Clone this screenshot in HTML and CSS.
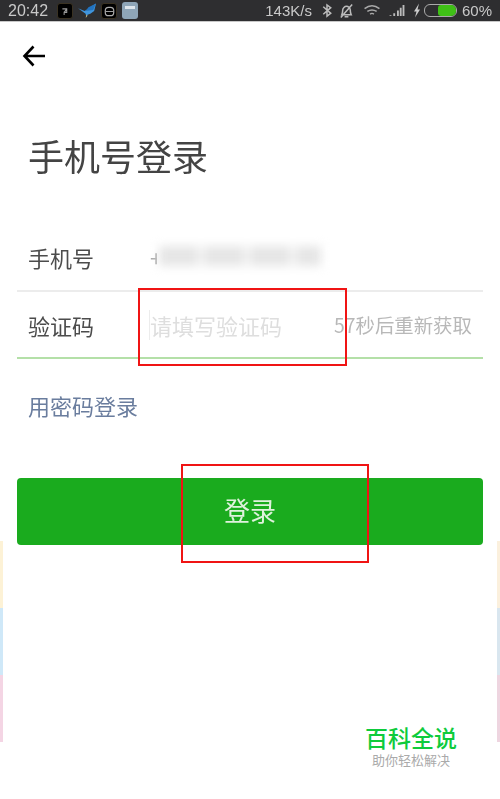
FILE: index.html
```html
<!DOCTYPE html>
<html lang="zh">
<head>
<meta charset="utf-8">
<title>手机号登录</title>
<link rel="stylesheet" href="styles.css">
</head>
<body>
<div class="phone">
  <header class="status">
    <div class="status-left">
      <span class="time">20:42</span>
      <span class="app-tile"><svg viewBox="0 0 16 16" width="14" height="15"><path d="M5 5h5v4H7v3M10 5l-3 4" fill="none" stroke="#999" stroke-width="1.200"/></svg></span>
      <svg class="bird" viewBox="0 0 20 16" width="19" height="16"><path d="M19 0l-2 8-4 3-3 1-1 3-1-4-8-6 7 3z" fill="#3f94dc"/><path d="M8 8l3-4 8-4-3 7z" fill="#2273c0"/><path d="M9 12l-1 3 2-2z" fill="#d9b45a"/></svg>
      <span class="app-tile"><svg viewBox="0 0 16 16" width="15" height="15"><rect x="3.500" y="3.500" width="9" height="9" rx="3.500" fill="none" stroke="#aaa" stroke-width="1.300"/><path d="M4 8h8" stroke="#aaa"/></svg></span>
      <span class="note"><span class="note-bar"></span></span>
    </div>
    <div class="status-right">
      <span class="speed">143K/s</span>
      <svg class="i-bt" viewBox="0 0 10 16" width="10" height="15"><path d="M1 4l8 7-4 3V2l4 3-8 7" fill="none" stroke="#bbb" stroke-width="1.600"/></svg>
      <svg class="i-bell" viewBox="0 0 18 16" width="17" height="16"><path d="M4 12c1-2 1-3 1-5 0-2 2-4 4-4s4 2 4 4c0 2 0 3 1 5zM7 14h4M3 15L15 1" fill="none" stroke="#bbb" stroke-width="1.600"/></svg>
      <svg class="i-wifi" viewBox="0 0 18 14" width="18" height="13"><path d="M1 5c5-4 11-4 16 0M4 8c3-2 7-2 10 0M7 11c1-1 3-1 4 0" fill="none" stroke="#aaa" stroke-width="1.600"/></svg>
      <svg class="i-signal" viewBox="0 0 18 14" width="18" height="13"><path d="M1 12h2v1H1zM5 10h2v3H5zM9 7h2v6H9zM12 4h2v9h-2zM15 1h2v12h-2z" fill="#bbb"/></svg>
      <svg class="i-bolt" viewBox="0 0 8 14" width="8" height="15"><path d="M6 0L1 8h2.500L2 14l5-8H4.500z" fill="#ccc"/></svg>
      <span class="battery"><span class="battery-fill"></span></span>
      <span class="pct">60%</span>
    </div>
  </header>
  <div class="shade"></div>

  <main class="content">
    <button class="back" aria-label="返回">
      <svg viewBox="0 0 24 24" width="24" height="24"><path d="M23 12H2.500M11.500 2.500L2.500 12l9 9.500" fill="none" stroke="#000" stroke-width="2.600"/></svg>
    </button>
    <h1 class="title">手机号登录</h1>

    <section class="form">
      <div class="row row-phone">
        <span class="label">手机号</span>
        <span class="phone-value"><span class="plus">+</span><span class="blur"><span class="smudge"></span></span></span>
      </div>
      <div class="row row-code">
        <span class="label">验证码</span>
        <span class="code-input"><span class="caret"></span>请填写验证码</span>
        <span class="resend">57秒后重新获取</span>
      </div>
    </section>

    <a class="pw-link">用密码登录</a>
    <button class="login">登录</button>
  </main>

  <div class="mark mark-code"></div>
  <div class="mark mark-login"></div>

  <div class="edge edge-left"><i class="e-yellow"></i><i class="e-blue"></i><i class="e-pink"></i></div>
  <div class="edge edge-right"><i class="e-yellow"></i><i class="e-blue"></i><i class="e-pink"></i></div>

  <div class="watermark">
    <div class="wm-title">百科全说</div>
    <div class="wm-sub">助你轻松解决</div>
  </div>
</div>
</body>
</html>
```
FILE: styles.css
```css
* { box-sizing: border-box; }
html, body { margin: 0; padding: 0; background: #fff; }
body { font-family: "Noto Sans CJK SC", "Liberation Sans", sans-serif; }
.phone { position: relative; width: 500px; height: 799px; overflow: hidden; background: #fff; }

.status { height: 21px; background: #2e2e30; color: #c9c9c9; font: 15px/21px "Liberation Sans", sans-serif; display: flex; justify-content: space-between; align-items: center; padding: 0 8px 0 8px; filter: blur(0.5px); }
.status-left, .status-right { display: flex; align-items: center; }
.time { font-size: 16px; margin-right: 9px; }
.app-tile { width: 16px; height: 16px; background: #000; border: 1px solid #3a3222; border-radius: 3px; display: block; line-height: 0; }
.bird { margin: 0 4px 0 5px; }
.note { width: 16px; height: 17px; margin-left: 5px; background: #8fa6b8; border-radius: 3px; padding: 4px 3px; display: block; }
.note-bar { display: block; height: 3px; background: #dfe6ec; }
.i-bt { margin-left: 10px; }
.i-bell { margin-left: 6px; }
.i-wifi { margin-left: 8px; }
.i-signal { margin-left: 7px; }
.i-bolt { margin-left: 7px; }
.battery { width: 33px; height: 13px; margin-left: 3px; border: 1px solid #aaa; border-radius: 6px; padding: 0 0 0 13px; display: block; }
.battery-fill { display: block; height: 11px; background: #3fc016; border-radius: 3px 5px 5px 3px; }
.pct { margin-left: 5px; }
.shade { height: 1px; background: #c8c8c8; }

.content { padding: 0 17px; filter: blur(0.5px); }
.back { display: block; border: 0; background: none; padding: 0; margin: 21px 0 0 5px; height: 25px; line-height: 0; }
.title { margin: 62px 0 0 11px; font-size: 36px; line-height: 50px; font-weight: 400; color: #444; }

.form { margin-top: 44px; }
.row { height: 67px; display: flex; align-items: center; padding-left: 11px; font-size: 22px; }
.row-phone { border-bottom: 2px solid #ececec; height: 68px; }
.row-code { border-bottom: 2px solid #b4e0a8; height: 67px; }
.label { width: 122px; color: #4c4c4c; }
.phone-value { position: relative; display: flex; align-items: center; color: #aaa; }
.plus { display: block; }
.blur { position: absolute; left: 7px; top: -8px; width: 166px; height: 46px; background: #fff; display: flex; align-items: center; padding: 0 2px; }
.smudge { display: block; width: 100%; height: 20px; background: repeating-linear-gradient(90deg, #e6e6e6 0 38px, #f3f3f3 38px 46px); filter: blur(5px); }
.code-input { position: relative; width: 184px; color: #dedede; }
.caret { position: absolute; left: -1px; top: 1px; width: 1px; height: 30px; background: #ececec; }
.resend { color: #b8b8b8; font-size: 19.4px; white-space: nowrap; }

.pw-link { display: block; margin: 29px 0 0 11px; font-size: 22px; line-height: 34px; color: #6a7d9e; }
.login { display: block; width: 100%; height: 67px; margin-top: 56px; padding: 0 0 4px; border: 0; border-radius: 4px; background: #1aab1e; color: #dff2dd; font: 400 26px "Noto Sans CJK SC", sans-serif; }

.mark { position: absolute; border: 2px solid #f01414; }
.mark-code { left: 138px; top: 288px; width: 209px; height: 78px; }
.mark-login { left: 181px; top: 464px; width: 188px; height: 99px; }

.edge { position: absolute; top: 541px; width: 3px; height: 201px; display: flex; flex-direction: column; }
.edge i { display: block; flex: 1; }
.edge-left { left: 0; }
.edge-right { right: 0; }
.e-yellow { background: #fdf2d6; }
.e-blue { background: #cfe8f8; }
.e-pink { background: #f4d5e4; }
.edge-right .e-yellow { background: #fbf0dd; }
.edge-right .e-blue { background: #d9e6ef; }
.edge-right .e-pink { background: #eed5e0; }

.watermark { position: absolute; left: 365px; top: 724px; width: 90px; text-align: center; }
.wm-title { font-size: 23px; line-height: 27px; font-weight: 500; color: #0ecb3c; white-space: nowrap; }
.wm-sub { font-size: 13px; line-height: 18px; color: #aaa; white-space: nowrap; margin-left: 2px; }
```
